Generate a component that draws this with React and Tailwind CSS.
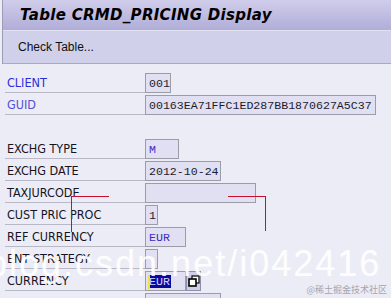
import React from "react";

const rows = [
  { label: "CLIENT", color: "text-[#2b2bd9]", value: "001", w: "w-[26px]" },
  { label: "GUID", color: "text-[#5050d4]", value: "00163EA71FFC1ED287BB1870627A5C37", w: "w-[231px]" },
  { blank: true },
  { label: "EXCHG TYPE", value: "M", w: "w-[34px]", blue: true },
  { label: "EXCHG DATE", value: "2012-10-24", w: "w-[76px]" },
  { label: "TAXJURCODE", value: "", w: "w-[111px]" },
  { label: "CUST PRIC PROC", value: "1", w: "w-[13px]" },
  { label: "REF CURRENCY", value: "EUR", w: "w-[41px]", blue: true },
  { label: "ENT STRATEGY", value: "", w: "w-[13px]" },
  { label: "CURRENCY", value: "EUR", w: "w-[41px]", selected: true },
  { label: "", value: "", w: "w-[76px]" },
];

function Field({ row }) {
  return (
    <div className="flex items-end h-[22px]">
      <div
        className={`h-[20px] ${row.w} border border-[#9c9ca8] bg-[#e1e0f3] pl-[3px] pt-[1px] whitespace-nowrap overflow-hidden font-['Liberation_Mono',monospace] text-[11.6px] leading-[17px] ${
          row.blue ? "text-[#3a2fc0]" : "text-[#1c1c2c]"
        }`}
      >
        {row.selected ? (
          <span className="relative inline-block bg-[#0a0a9c] text-[#d8d0ff] leading-[13px] pr-[1px]">
            <span className="absolute left-[-1px] top-0 h-[14px] w-[2px] bg-[#f0e040]" />
            {row.value}
          </span>
        ) : (
          row.value
        )}
      </div>
      {row.selected && (
        <div className="h-[20px] w-[15px] border border-[#8f8fa8] bg-[#cfcde8] flex items-center justify-center">
          <svg width="12" height="12" viewBox="0 0 12 12">
            <rect x="4" y="1" width="7" height="7" fill="#ffffff" stroke="#000" strokeWidth="1.2" />
            <rect x="1" y="4" width="7" height="7" fill="#ffffff" stroke="#000" strokeWidth="1.6" />
          </svg>
        </div>
      )}
    </div>
  );
}

export default function App() {
  return (
    <div className="relative w-[391px] h-[298px] overflow-hidden bg-[#ececf6]">
      {/* header + toolbar */}
      <div className="ml-[2px] border-l border-[#9d9cb8]">
        <div className="h-[30px] bg-gradient-to-b from-[#d0cdeb] to-[#b0add8] pl-[17px] flex items-center">
          <span className="font-['DejaVu_Sans',sans-serif] font-bold italic text-[15px] text-black tracking-[0.3px]">
            Table CRMD_PRICING Display
          </span>
        </div>
        <div className="h-[1px] bg-[#e2e1f2]" />
        <div className="h-[33px] bg-[#d1d0ea] border-b border-[#a9a8c6] pl-[15px] flex items-center">
          <span className="font-['Liberation_Sans',sans-serif] text-[12px] text-[#101010]">Check Table...</span>
        </div>
      </div>

      {/* form */}
      <div className="pt-[7px]">
        {rows.map((row, i) => (
          <div key={i} className="flex h-[22px]">
            <div
              className={`ml-[5px] w-[140px] h-[22px] pl-[2px] pt-[4px] flex items-center font-['DejaVu_Sans_Condensed','Liberation_Sans',sans-serif] text-[12.5px] ${
                row.color || "text-[#141424]"
              } ${row.blank ? "" : "border-b border-[#b8b8c6]"}`}
            >
              {row.label}
            </div>
            {!row.blank && <Field row={row} />}
          </div>
        ))}
      </div>

      {/* red annotation lines */}
      <div className="absolute left-[71px] top-[196px] w-[38px] h-[1px] bg-[#c8102e]" />
      <div className="absolute left-[71px] top-[196px] w-[1px] h-[36px] bg-[#c8102e]" />
      <div className="absolute left-[228px] top-[196px] w-[38px] h-[1px] bg-[#c8102e]" />
      <div className="absolute left-[265px] top-[196px] w-[1px] h-[35px] bg-[#c8102e]" />

      {/* watermark */}
      <div className="absolute left-[-13px] top-[244px] font-['Liberation_Sans',sans-serif] text-[36px] leading-[40px] tracking-[2px] text-white/90 whitespace-nowrap pointer-events-none">
        blog.csdn.net/i042416
      </div>
      <div className="absolute right-[4px] bottom-[3px] font-['Noto_Sans_CJK_SC',sans-serif] text-[9px] leading-[10px] text-[#a4a4b0] whitespace-nowrap">
        @稀土掘金技术社区
      </div>
    </div>
  );
}
